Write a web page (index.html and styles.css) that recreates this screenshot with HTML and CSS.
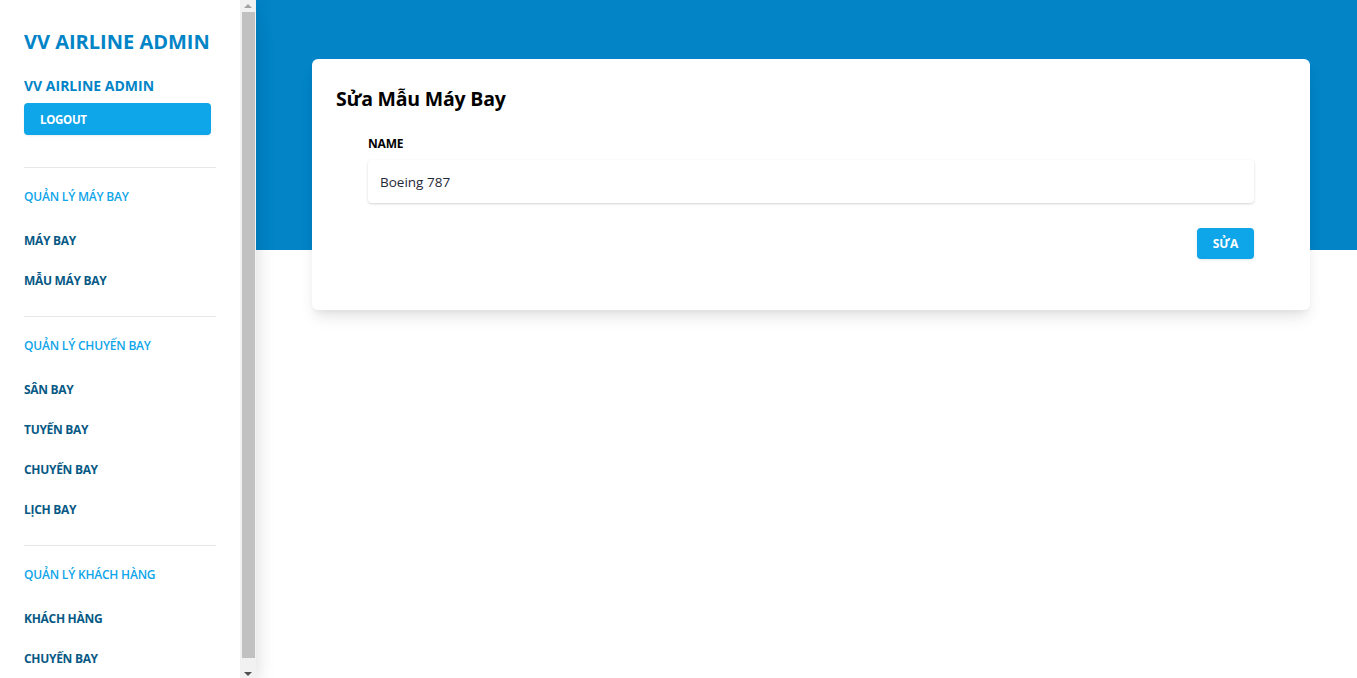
FILE: index.html
```html
<!DOCTYPE html>
<html lang="vi">
<head>
<meta charset="utf-8">
<title>VV Airline Admin</title>
<link rel="stylesheet" href="styles.css">
</head>
<body>
<div class="app">
  <nav class="sidebar">
    <div class="sidebar-inner">
      <div class="brand">VV AIRLINE ADMIN</div>
      <div class="user">VV AIRLINE ADMIN</div>
      <button class="logout">LOGOUT</button>
      <hr class="divider">
      <div class="section-title">QUẢN LÝ MÁY BAY</div>
      <a class="nav-item">MÁY BAY</a>
      <a class="nav-item">MẪU MÁY BAY</a>
      <hr class="divider">
      <div class="section-title">QUẢN LÝ CHUYẾN BAY</div>
      <a class="nav-item">SÂN BAY</a>
      <a class="nav-item">TUYẾN BAY</a>
      <a class="nav-item">CHUYẾN BAY</a>
      <a class="nav-item">LỊCH BAY</a>
      <hr class="divider">
      <div class="section-title">QUẢN LÝ KHÁCH HÀNG</div>
      <a class="nav-item">KHÁCH HÀNG</a>
      <a class="nav-item">CHUYẾN BAY</a>
    </div>
    <div class="scrollbar" aria-hidden="true">
      <div class="sb-btn"><span class="arrow-up"></span></div>
      <div class="sb-thumb"></div>
      <div class="sb-btn sb-btn-bottom"><span class="arrow-down"></span></div>
    </div>
  </nav>
  <main class="main">
    <div class="header-band"></div>
    <div class="content">
      <section class="card">
        <h2 class="card-title">Sửa Mẫu Máy Bay</h2>
        <form class="form">
          <label class="label">NAME</label>
          <input class="input" type="text" value="Boeing 787">
          <div class="actions">
            <button type="button" class="submit">SỬA</button>
          </div>
        </form>
      </section>
    </div>
  </main>
</div>
</body>
</html>
```

FILE: styles.css
```css
* { box-sizing: border-box; }
html, body { margin: 0; padding: 0; height: 100%; }
body {
  font-family: "Open Sans", "Noto Sans", sans-serif;
  background: #ffffff;
  color: #000;
  overflow: hidden;
}
.app {
  display: flex;
  height: 678px;
}
.sidebar {
  width: 256px;
  flex: 0 0 256px;
  height: 678px;
  overflow: hidden;
  background: #fff;
  display: flex;
  box-shadow: 0 20px 25px -5px rgba(0,0,0,0.1), 4px 0 14px rgba(0,0,0,0.06);
  position: relative;
  z-index: 2;
}
.sidebar-inner {
  width: 240px;
  flex: 0 0 240px;
  padding: 28px 24px 12px 24px;
  display: flex;
  flex-direction: column;
}
.sidebar-inner > * { flex-shrink: 0; }
.scrollbar {
  width: 16px;
  flex: 0 0 16px;
  height: 678px;
  background: #f1f1f1;
  display: flex;
  flex-direction: column;
  align-items: center;
}
.scrollbar > * { flex-shrink: 0; }
.sb-btn {
  height: 12px;
  width: 16px;
  display: flex;
  justify-content: center;
  align-items: flex-start;
  padding-top: 4px;
}
.sb-btn-bottom {
  height: 20px;
  padding-top: 14px;
}
.arrow-up {
  width: 0; height: 0;
  border-left: 4px solid transparent;
  border-right: 4px solid transparent;
  border-bottom: 4px solid #a3a3a3;
}
.arrow-down {
  width: 0; height: 0;
  border-left: 4px solid transparent;
  border-right: 4px solid transparent;
  border-top: 4px solid #505050;
}
.sb-thumb {
  width: 13px;
  height: 646px;
  margin-left: 1px;
  background: #c1c1c1;
}
.brand {
  font-size: 20px;
  font-weight: 700;
  color: #0284c7;
  line-height: 28px;
}
.user {
  margin-top: 20px;
  font-size: 14px;
  font-weight: 700;
  color: #0284c7;
  line-height: 20px;
}
.logout {
  margin-top: 7px;
  width: 187px;
  height: 32px;
  border: none;
  border-radius: 4px;
  background: #0ea5e9;
  color: #fff;
  font-family: inherit;
  font-size: 11.5px;
  font-weight: 700;
  text-align: left;
  padding: 0 16px;
  letter-spacing: -0.3px;
  box-shadow: 0 1px 2px rgba(0,0,0,0.08);
}
.divider {
  margin: 32px 0 17px 0;
  border: none;
  border-top: 1px solid #e5e7eb;
  height: 0;
  width: 100%;
}
.nav-item + .divider { margin-top: 15px; }
.section-title {
  padding: 4px 0 16px 0;
  font-size: 12px;
  line-height: 16px;
  font-weight: 600;
  color: #0ea5e9;
  letter-spacing: -0.2px;
}
.nav-item {
  display: block;
  padding: 12px 0;
  font-size: 12px;
  line-height: 16px;
  font-weight: 700;
  color: #075985;
  letter-spacing: -0.3px;
  text-decoration: none;
}
.main {
  flex: 1;
  position: relative;
  min-width: 0;
}
.header-band {
  height: 250px;
  background: #0284c7;
}
.content {
  margin-top: -191px;
  padding: 0 47px 0 56px;
}
.card {
  background: #fff;
  border-radius: 6px;
  box-shadow: 0 10px 15px -3px rgba(0,0,0,0.1), 0 4px 6px -2px rgba(0,0,0,0.05);
  padding: 26px 24px 51px 24px;
  height: 251px;
}
.card-title {
  margin: 0;
  font-size: 19.5px;
  line-height: 28px;
  font-weight: 700;
  color: #000;
  letter-spacing: -0.2px;
}
.form {
  margin-top: 23px;
  padding: 0 32px;
  display: flex;
  flex-direction: column;
}
.label {
  font-size: 12px;
  line-height: 16px;
  font-weight: 700;
  color: #000;
  letter-spacing: -0.2px;
}
.input {
  margin-top: 8px;
  height: 43px;
  border: none;
  border-radius: 4px;
  background: #fff;
  box-shadow: 0 1px 3px rgba(0,0,0,0.12), 0 1px 2px rgba(0,0,0,0.06);
  padding: 0 12px;
  font-family: inherit;
  font-size: 13.5px;
  color: #1f2937;
  outline: none;
}
.actions {
  display: flex;
  justify-content: flex-end;
  margin-top: 25px;
}
.submit {
  width: 57px;
  height: 31px;
  border: none;
  border-radius: 4px;
  background: #0ea5e9;
  color: #fff;
  font-family: inherit;
  font-size: 12px;
  font-weight: 700;
  box-shadow: 0 1px 3px rgba(0,0,0,0.1);
}
```
